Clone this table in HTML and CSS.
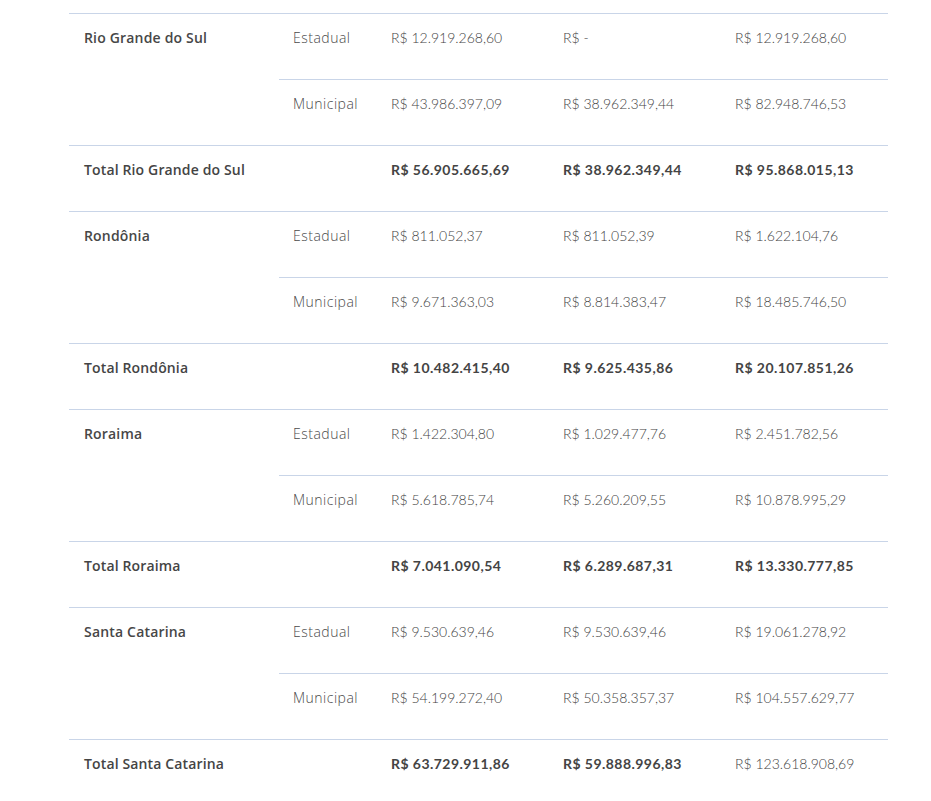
FILE: index.html
```html
<!DOCTYPE html>
<html lang="pt-BR">
<head>
<meta charset="utf-8">
<title>Tabela</title>
<link rel="stylesheet" href="styles.css">
</head>
<body>
<div class="wrap">
<table class="grid">
<colgroup>
<col class="c-state"><col class="c-type"><col class="c-val"><col class="c-val"><col class="c-last">
</colgroup>
<tbody>
<tr><td class="state" rowspan="2">Rio Grande do Sul</td><td class="type">Estadual</td><td>R$ 12.919.268,60</td><td>R$ -</td><td>R$ 12.919.268,60</td></tr>
<tr><td class="type">Municipal</td><td>R$ 43.986.397,09</td><td>R$ 38.962.349,44</td><td>R$ 82.948.746,53</td></tr>
<tr class="total"><td class="state">Total Rio Grande do Sul</td><td></td><td>R$ 56.905.665,69</td><td>R$ 38.962.349,44</td><td>R$ 95.868.015,13</td></tr>

<tr><td class="state" rowspan="2">Rondônia</td><td class="type">Estadual</td><td>R$ 811.052,37</td><td>R$ 811.052,39</td><td>R$ 1.622.104,76</td></tr>
<tr><td class="type">Municipal</td><td>R$ 9.671.363,03</td><td>R$ 8.814.383,47</td><td>R$ 18.485.746,50</td></tr>
<tr class="total"><td class="state">Total Rondônia</td><td></td><td>R$ 10.482.415,40</td><td>R$ 9.625.435,86</td><td>R$ 20.107.851,26</td></tr>

<tr><td class="state" rowspan="2">Roraima</td><td class="type">Estadual</td><td>R$ 1.422.304,80</td><td>R$ 1.029.477,76</td><td>R$ 2.451.782,56</td></tr>
<tr><td class="type">Municipal</td><td>R$ 5.618.785,74</td><td>R$ 5.260.209,55</td><td>R$ 10.878.995,29</td></tr>
<tr class="total"><td class="state">Total Roraima</td><td></td><td>R$ 7.041.090,54</td><td>R$ 6.289.687,31</td><td>R$ 13.330.777,85</td></tr>

<tr><td class="state" rowspan="2">Santa Catarina</td><td class="type">Estadual</td><td>R$ 9.530.639,46</td><td>R$ 9.530.639,46</td><td>R$ 19.061.278,92</td></tr>
<tr><td class="type">Municipal</td><td>R$ 54.199.272,40</td><td>R$ 50.358.357,37</td><td>R$ 104.557.629,77</td></tr>
<tr class="total"><td class="state">Total Santa Catarina</td><td></td><td>R$ 63.729.911,86</td><td>R$ 59.888.996,83</td><td class="plain">R$ 123.618.908,69</td></tr>
</tbody>
</table>
</div>
</body>
</html>
```

FILE: styles.css
```css
html, body {
  margin: 0;
  padding: 0;
  background: #ffffff;
}

.wrap {
  padding: 13px 0 0 69px;
}

.grid {
  border-collapse: collapse;
  table-layout: fixed;
  width: 819px;
  font-family: Lato, "Open Sans", sans-serif;
  font-size: 14px;
  color: #444444;
}

.c-state { width: 210px; }
.c-type { width: 98px; }
.c-val { width: 172px; }
.c-last { width: 167px; }

.grid td {
  border-top: 1px solid #c9d5e8;
  height: 66px;
  box-sizing: border-box;
  padding: 14px 14px 0 14px;
  line-height: 20px;
  vertical-align: top;
  font-weight: 300;
  white-space: nowrap;
}

.grid td.type {
  font-family: "Open Sans", Lato, sans-serif;
  font-weight: 300;
  font-size: 14px;
  letter-spacing: 0.5px;
  color: #4a4a4a;
}

.grid td.state {
  padding-left: 15px;
  font-family: "Open Sans", Lato, sans-serif;
  font-weight: 600;
  letter-spacing: 0.18px;
  color: #474747;
}

.grid tr.total td {
  font-weight: 700;
  color: #444444;
  letter-spacing: 0.45px;
}

.grid tr.total td.state {
  font-weight: 600;
  letter-spacing: 0.14px;
}

.grid tr.total td.plain {
  font-weight: 300;
  color: #444444;
  letter-spacing: 0;
}
```
